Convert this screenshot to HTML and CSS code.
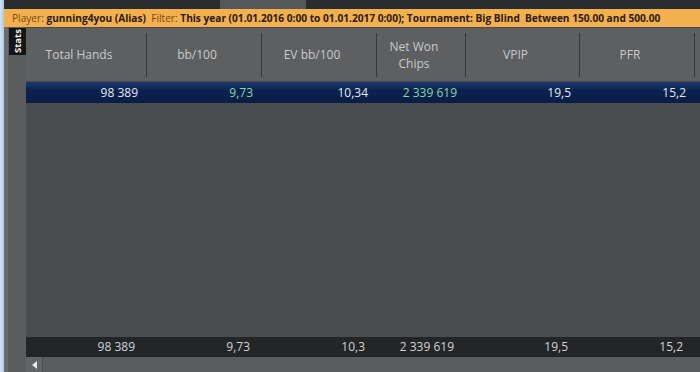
FILE: index.html
```html
<!DOCTYPE html>
<html lang="en">
<head>
<meta charset="UTF-8">
<title>Stats</title>
<link rel="stylesheet" href="styles.css">
</head>
<body>

<div class="window">
    <div class="edge"></div>
    <div class="content">
        <div class="topbar">
            <div class="topbar-tab"></div>
        </div>
        <div class="filterbar">
            <span class="key">Player:</span> <b>gunning4you (Alias)</b>&nbsp;
            <span class="key">Filter:</span> <b>This year (01.01.2016 0:00 to 01.01.2017 0:00); Tournament: Big Blind&nbsp; Between 150.00 and 500.00</b>
        </div>
        <div class="main">
            <div class="side">
                <div class="side-tab">Stats</div>
            </div>
            <div class="grid">
                <div class="row header">
                    <div class="cell">Total Hands</div>
                    <div class="cell">bb/100</div>
                    <div class="cell">EV bb/100</div>
                    <div class="cell">Net Won<br>Chips</div>
                    <div class="cell">VPIP</div>
                    <div class="cell">PFR</div>
                    <div class="cell last"></div>
                </div>
                <div class="row selected">
                    <div class="cell">98 389</div>
                    <div class="cell green">9,73</div>
                    <div class="cell">10,34</div>
                    <div class="cell green">2 339 619</div>
                    <div class="cell">19,5</div>
                    <div class="cell">15,2</div>
                    <div class="cell"></div>
                </div>
                <div class="body"></div>
                <div class="row footer">
                    <div class="cell">98 389</div>
                    <div class="cell">9,73</div>
                    <div class="cell">10,3</div>
                    <div class="cell">2 339 619</div>
                    <div class="cell">19,5</div>
                    <div class="cell">15,2</div>
                    <div class="cell"></div>
                </div>
                <div class="scrollbar">
                    <div class="scroll-btn">
                        <svg width="5" height="8" viewBox="0 0 5 8"><polygon points="5,0 5,8 0,4" fill="#e8e8e8"/></svg>
                    </div>
                </div>
            </div>
        </div>
    </div>
</div>

</body>
</html>
```

FILE: styles.css
```css
body {
    margin: 0;
    padding: 0;
    font-family: "Open Sans", "Liberation Sans", sans-serif;
    background-color: #4a4c4e;
    overflow: hidden;
}

.window {
    display: flex;
    height: 372px;
}

.edge {
    width: 4px;
    background: linear-gradient(to right, #d4e4f4, #a9c9ea);
}

.content {
    flex: 1;
    display: flex;
    flex-direction: column;
    min-width: 0;
}

.topbar {
    height: 9px;
    background-color: #2a2c30;
    padding-left: 216px;
}

.topbar-tab {
    width: 86px;
    height: 9px;
    background-color: #55575a;
}

.filterbar {
    height: 18px;
    line-height: 18px;
    background-color: #f2b04e;
    padding-left: 8px;
    font-size: 10.13px;
    color: #2a1a08;
    white-space: nowrap;
    overflow: hidden;
}

.filterbar .key {
    color: #7a4a18;
}

.main {
    flex: 1;
    display: flex;
    background-color: #6a6c6e;
    padding-left: 4px;
}

.side {
    width: 19px;
    background-color: #5b5c5e;
    padding-top: 1px;
}

.side-tab {
    width: 17px;
    height: 27px;
    background-color: #141414;
    color: #f0f0f0;
    font-size: 9.5px;
    font-weight: bold;
    writing-mode: vertical-rl;
    transform: rotate(180deg);
    text-align: center;
    line-height: 17px;
    margin-left: 1px;
}

.grid {
    flex: 1;
    display: flex;
    flex-direction: column;
    padding-top: 1px;
    background-color: #4a4c4e;
}

.row {
    display: grid;
    grid-template-columns: 121px 115px 115px 89px 114px 115px 1fr;
}

.header {
    height: 53px;
    background-color: #5d5f61;
    border-bottom: 1px solid #46484a;
    align-items: center;
    color: #c9cacb;
    font-size: 12px;
    line-height: 17px;
}

.header .cell {
    height: 44px;
    display: flex;
    align-items: center;
    justify-content: center;
    text-align: center;
    padding-right: 14px;
    border-right: 1px solid #36383a;
}

.header .cell.last {
    border-right: none;
}

.selected {
    height: 21px;
    line-height: 21px;
    background: linear-gradient(to bottom, #1c3a6e, #0b2250 40%, #0a1d45);
    color: #e4eaf2;
    font-size: 12px;
}

.selected .cell {
    text-align: right;
    padding-right: 9px;
}

.footer .cell {
    text-align: right;
    padding-right: 12px;
}

.green {
    color: #80dca2;
}

.body {
    flex: 1;
    background-color: #4a4c4e;
}

.footer {
    height: 20px;
    line-height: 20px;
    background-color: #232527;
    color: #d2d3d4;
    font-size: 12px;
}

.scrollbar {
    height: 15px;
    background-color: #5a5c5e;
    display: flex;
}

.scroll-btn {
    width: 16px;
    height: 15px;
    background-color: #626466;
    border-right: 1px solid #4e5052;
    display: flex;
    align-items: center;
    justify-content: center;
}
```
